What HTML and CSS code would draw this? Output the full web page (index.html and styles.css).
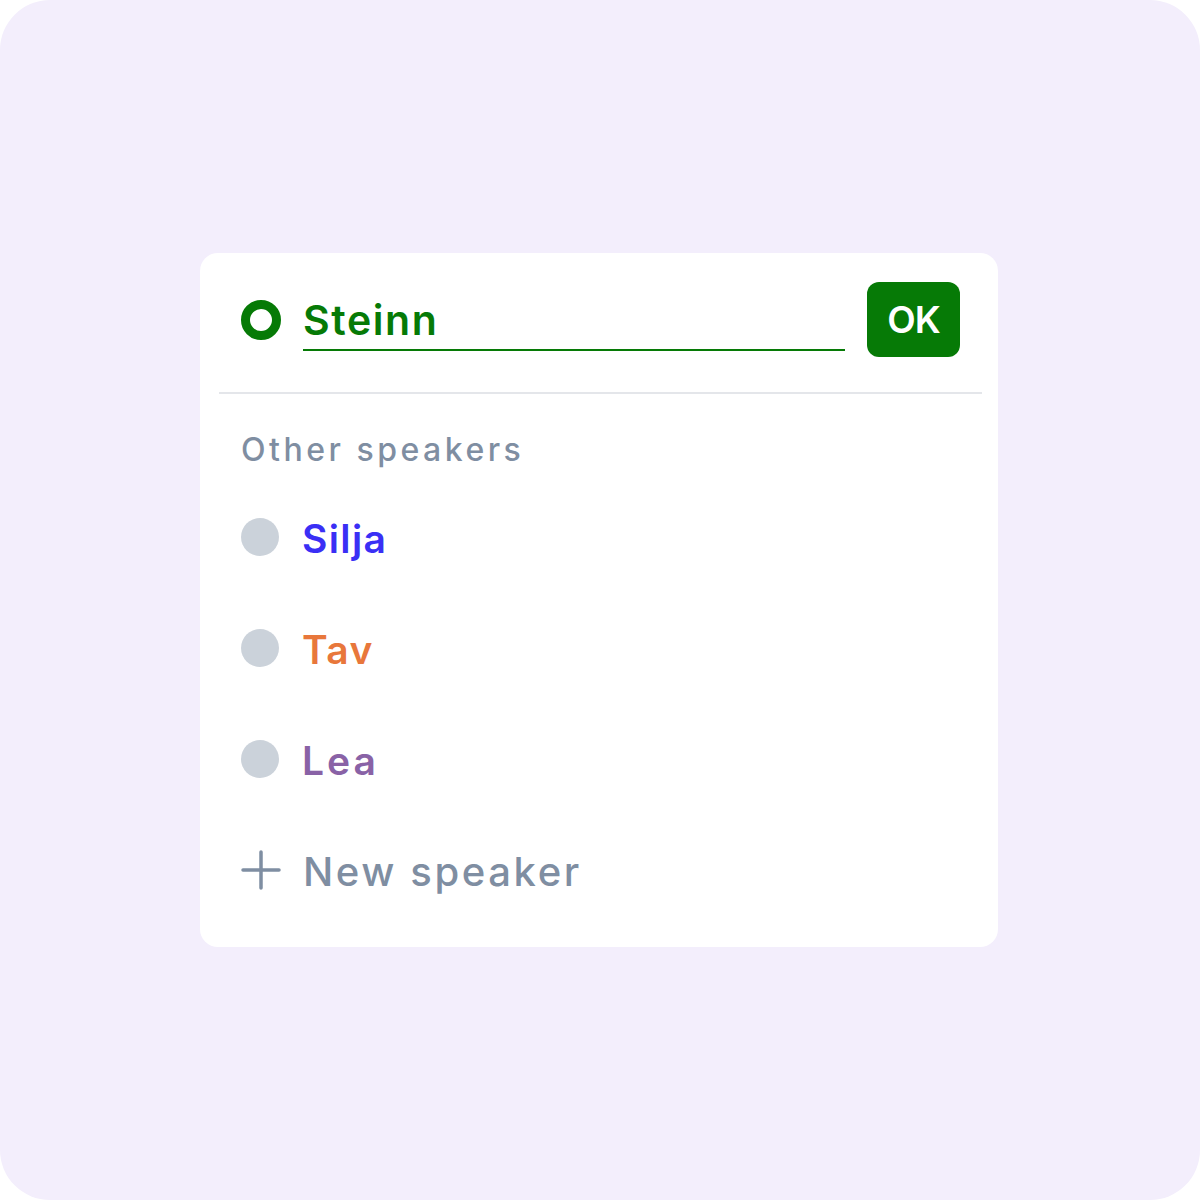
FILE: index.html
```html
<!DOCTYPE html>
<html>
<head>
<meta charset="utf-8">
<link rel="stylesheet" href="styles.css">
</head>
<body>
<div class="page">
  <div class="card">
    <div class="header">
      <span class="ring"></span>
      <div class="field"><span class="field-text">Steinn</span></div>
      <button class="ok">OK</button>
    </div>
    <div class="divider"></div>
    <div class="list">
      <div class="label">Other speakers</div>
      <div class="rows">
        <div class="row"><span class="dot"></span><span class="name silja">Silja</span></div>
        <div class="row"><span class="dot"></span><span class="name tav">Tav</span></div>
        <div class="row"><span class="dot"></span><span class="name lea">Lea</span></div>
        <div class="row">
          <svg class="plus" width="40" height="40" viewBox="0 0 40 40"><path d="M20 2V38M2 20H38" stroke="#7f8ea2" stroke-width="3.5" stroke-linecap="round" fill="none"/></svg>
          <span class="name newtext">New speaker</span>
        </div>
      </div>
    </div>
  </div>
</div>
</body>
</html>
```
FILE: styles.css
```css
html, body {
  margin: 0;
  padding: 0;
  background: #ffffff;
}
body {
  font-family: Inter, "Noto Sans", sans-serif;
}
.page {
  width: 1200px;
  height: 1200px;
  background: #f3eefc;
  border-radius: 50px;
  display: flex;
  align-items: center;
  justify-content: center;
}
.card {
  width: 798px;
  height: 694px;
  box-sizing: border-box;
  background: #ffffff;
  border-radius: 18px;
  padding-top: 29px;
  margin-left: -2px;
}
.header {
  display: flex;
  align-items: center;
  height: 75px;
  padding: 0 38px 0 41px;
}
.ring {
  width: 40px;
  height: 40px;
  box-sizing: border-box;
  border: 9px solid #067a06;
  border-radius: 50%;
  flex: none;
}
.field {
  flex: 1;
  align-self: flex-start;
  margin: 0 22px;
  height: 69px;
  box-sizing: border-box;
  border-bottom: 2px solid #067a06;
  display: flex;
  align-items: flex-end;
  padding-bottom: 8px;
}
.field-text {
  font-size: 41px;
  font-weight: 600;
  color: #067a06;
  line-height: 1;
  letter-spacing: 1.6px;
}
.ok {
  width: 93px;
  height: 75px;
  border: none;
  border-radius: 12px;
  background: #067a06;
  color: #ffffff;
  font-family: Inter, "Noto Sans", sans-serif;
  font-size: 37px;
  font-weight: 600;
  letter-spacing: -1px;
  padding: 0;
  flex: none;
}
.divider {
  height: 2px;
  background: #e4e6ea;
  margin: 35px 16px 0 19px;
}
.list {
  padding: 0 0 0 41px;
}
.label {
  font-size: 32px;
  font-weight: 500;
  color: #7f8ea2;
  line-height: 40px;
  margin-top: 36px;
  letter-spacing: 3.5px;
}
.rows {
  margin-top: 11px;
}
.row {
  display: flex;
  align-items: center;
  height: 111px;
}
.dot {
  width: 38px;
  height: 38px;
  border-radius: 50%;
  background: #cbd2da;
  flex: none;
}
.name {
  margin-left: 23px;
  font-size: 39px;
  font-weight: 600;
  line-height: 1;
  letter-spacing: 1.4px;
  padding-top: 4px;
}
.silja { color: #3a2ff5; }
.tav { color: #e8773b; }
.lea { color: #8962a6; letter-spacing: 3px; }
.plus { flex: none; }
.newtext {
  color: #7f8ea2;
  margin-left: 22px;
  font-size: 40px;
  font-weight: 500;
  letter-spacing: 2.6px;
}
```
